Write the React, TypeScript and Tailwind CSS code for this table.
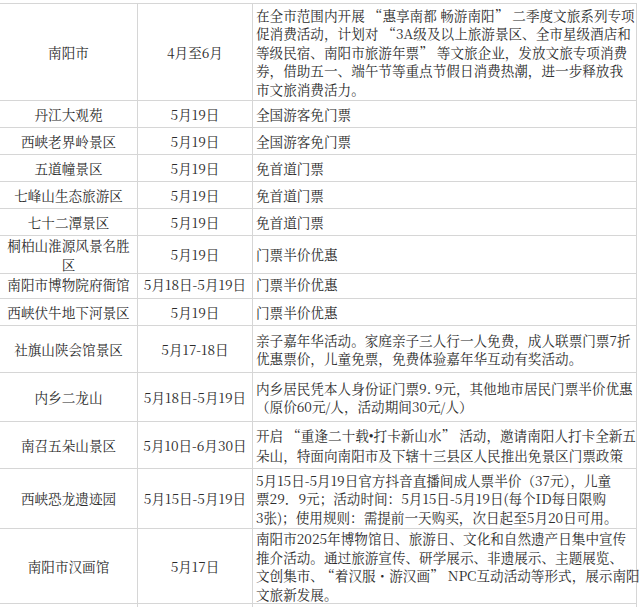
const rows = [
  {
    place: ["南阳市"],
    date: "4月至6月",
    lines: [
      "在全市范围内开展“惠享南都 畅游南阳”二季度文旅系列专项",
      "促消费活动，计划对“3A级及以上旅游景区、全市星级酒店和",
      "等级民宿、南阳市旅游年票”等文旅企业，发放文旅专项消费",
      "券，借助五一、端午节等重点节假日消费热潮，进一步释放我",
      "市文旅消费活力。",
    ],
    h: "h-[97px]",
  },
  { place: ["丹江大观苑"], date: "5月19日", lines: ["全国游客免门票"], h: "h-[27px]" },
  { place: ["西峡老界岭景区"], date: "5月19日", lines: ["全国游客免门票"], h: "h-[27px]" },
  { place: ["五道幢景区"], date: "5月19日", lines: ["免首道门票"], h: "h-[27px]" },
  { place: ["七峰山生态旅游区"], date: "5月19日", lines: ["免首道门票"], h: "h-[27px]" },
  { place: ["七十二潭景区"], date: "5月19日", lines: ["免首道门票"], h: "h-[27px]" },
  { place: ["桐柏山淮源风景名胜", "区"], date: "5月19日", lines: ["门票半价优惠"], h: "h-[35px]" },
  { place: ["南阳市博物院府衙馆"], date: "5月18日-5月19日", lines: ["门票半价优惠"], h: "h-[28px]" },
  { place: ["西峡伏牛地下河景区"], date: "5月19日", lines: ["门票半价优惠"], h: "h-[27px]" },
  {
    place: ["社旗山陕会馆景区"],
    date: "5月17-18日",
    lines: [
      "亲子嘉年华活动。家庭亲子三人行一人免费，成人联票门票7折",
      "优惠票价，儿童免票，免费体验嘉年华互动有奖活动。",
    ],
    h: "h-[47px]",
  },
  {
    place: ["内乡二龙山"],
    date: "5月18日-5月19日",
    lines: [
      "内乡居民凭本人身份证门票9. 9元，其他地市居民门票半价优惠",
      "（原价60元/人，活动期间30元/人）",
    ],
    h: "h-[49px]",
  },
  {
    place: ["南召五朵山景区"],
    date: "5月10日-6月30日",
    lines: [
      "开启“重逢二十载•打卡新山水”活动，邀请南阳人打卡全新五",
      "朵山，特面向南阳市及下辖十三县区人民推出免景区门票政策",
    ],
    h: "h-[47px]",
  },
  {
    place: ["西峡恐龙遗迹园"],
    date: "5月15日-5月19日",
    lines: [
      "5月15日-5月19日官方抖音直播间成人票半价（37元），儿童",
      "票29．9元；活动时间：5月15日-5月19日(每个ID每日限购",
      "3张)；使用规则：需提前一天购买，次日起至5月20日可用。",
    ],
    h: "h-[60px]",
  },
  {
    place: ["南阳市汉画馆"],
    date: "5月17日",
    lines: [
      "南阳市2025年博物馆日、旅游日、文化和自然遗产日集中宣传",
      "推介活动。通过旅游宣传、研学展示、非遗展示、主题展览、",
      "文创集市、“着汉服・游汉画”NPC互动活动等形式，展示南阳",
      "文旅新发展。",
    ],
    h: "h-[73px]",
  },
  { place: [""], date: "", lines: [""], h: "h-[27px]" },
];

// wide curly quotes and a narrow bullet, as in the source table
function Line({ text }: { text: string }) {
  const parts = text.split(/([“”•])/);
  return (
    <span>
      {parts.map((p, k) => {
        if (p === "“")
          return (
            <span key={k} className="pl-[0.3em]">
              {p}
            </span>
          );
        if (p === "”")
          return (
            <span key={k} className="pr-[0.3em]">
              {p}
            </span>
          );
        if (p === "•")
          return (
            <span key={k} className="font-['Liberation_Serif']">
              {p}
            </span>
          );
        return p;
      })}
    </span>
  );
}

export default function App() {
  return (
    <div
      className="h-[607px] w-[640px] overflow-hidden bg-white pt-[3px] text-[13.6px] leading-[18.5px] text-[#2b2b2b]"
      style={{ fontFamily: '"Noto Serif CJK SC", "Noto Sans CJK SC", serif' }}
    >
      <div className="w-[637px] border-t border-[#d6d6d6]">
        {rows.map((row, i) => (
          <div
            key={i}
            className={`grid grid-cols-[138px_115px_384px] ${row.h}`}
          >
            <div className="flex flex-col items-center justify-center whitespace-nowrap border-b border-r border-[#d6d6d6] text-center">
              {row.place.map((p, j) => (
                <span key={j}>{p}</span>
              ))}
            </div>
            <div className="flex items-center justify-center whitespace-nowrap border-b border-r border-[#d6d6d6]">
              {row.date}
            </div>
            <div className="flex flex-col justify-center whitespace-nowrap border-b border-r border-[#d6d6d6] pl-[3px]">
              {row.lines.map((l, j) => (
                <Line key={j} text={l} />
              ))}
            </div>
          </div>
        ))}
      </div>
    </div>
  );
}
